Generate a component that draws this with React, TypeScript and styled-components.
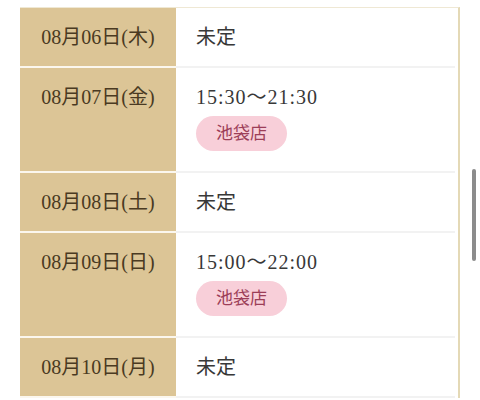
import React from "react";
import styled, { createGlobalStyle } from "styled-components";

const Global = createGlobalStyle`
  html, body { margin: 0; padding: 0; background: #fff; overflow: hidden; height: 400px; }
  body { font-family: "Liberation Serif", "Noto Sans CJK JP", serif; }
`;

const Page = styled.div`
  width: 480px;
  height: 400px;
  padding: 7px 20px 0 20px;
  box-sizing: border-box;
  position: relative;
  overflow: hidden;
`;

const Table = styled.div`
  display: flex;
  flex-direction: column;
  border-top: 1px solid #efe8d4;
  border-right: 2px solid #e4d9b6;
  background: #fff;
`;

const Row = styled.div`
  display: grid;
  grid-template-columns: 156px 1fr;
`;

const DateCell = styled.div`
  background: #dcc596;
  color: #4a3a22;
  font-size: 20px;
  line-height: 28px;
  text-align: center;
  padding: 15px 0;
  border-bottom: 2px solid #fbf7ee;
`;

const InfoCell = styled.div`
  display: flex;
  flex-direction: column;
  align-items: flex-start;
  gap: 5px;
  padding: 15px 0 15px 20px;
  margin-right: 3px;
  color: #383838;
  font-size: 20px;
  line-height: 28px;
  border-bottom: 2px solid #f2f2f2;
`;

const Time = styled.span`
  letter-spacing: 1px;
`;

const Shop = styled.span`
  display: inline-flex;
  align-items: center;
  height: 35px;
  padding: 0 20px;
  border-radius: 18px;
  background: #f8cfd9;
  color: #9c3e58;
  font-size: 17px;
  margin-bottom: 5px;
`;

const Scrollbar = styled.div`
  position: absolute;
  left: 472px;
  top: 169px;
  width: 4px;
  height: 92px;
  border-radius: 2px;
  background: #8c8c8c;
`;

type Day = { date: string; time?: string; shop?: string };

const days: Day[] = [
  { date: "08月06日(木)" },
  { date: "08月07日(金)", time: "15:30〜21:30", shop: "池袋店" },
  { date: "08月08日(土)" },
  { date: "08月09日(日)", time: "15:00〜22:00", shop: "池袋店" },
  { date: "08月10日(月)" },
];

export default function App() {
  return (
    <>
      <Global />
      <Page>
        <Table>
          {days.map((d) => (
            <Row key={d.date}>
              <DateCell>{d.date}</DateCell>
              <InfoCell>
                {d.time ? <Time>{d.time}</Time> : <span>未定</span>}
                {d.shop && <Shop>{d.shop}</Shop>}
              </InfoCell>
            </Row>
          ))}
        </Table>
        <Scrollbar />
      </Page>
    </>
  );
}
